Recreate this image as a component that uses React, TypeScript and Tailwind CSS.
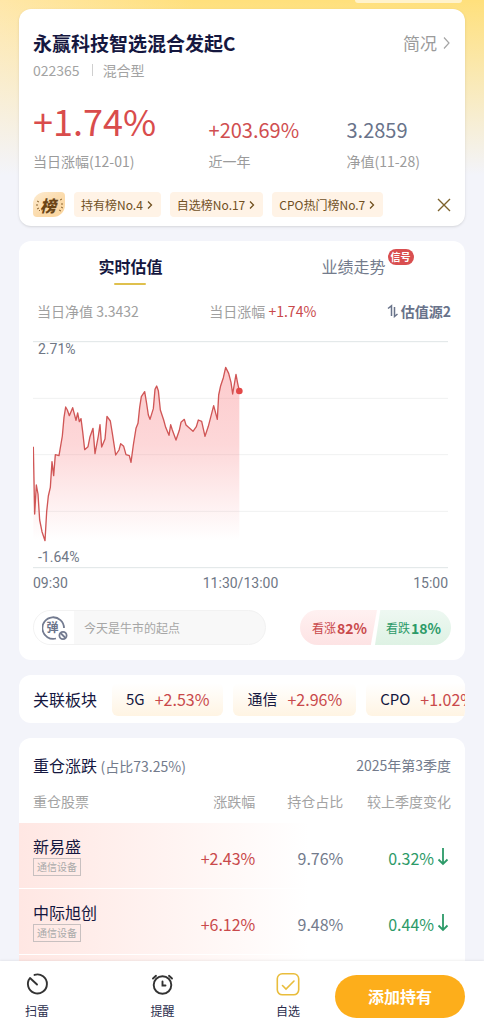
import { useState } from "react";

const ranks = ["持有榜No.4", "自选榜No.17", "CPO热门榜No.7"];

const sectors = [
  { name: "5G", change: "+2.53%" },
  { name: "通信", change: "+2.96%" },
  { name: "CPO", change: "+1.02%" },
];

const stocks = [
  { name: "新易盛", tag: "通信设备", change: "+2.43%", ratio: "9.76%", diff: "0.32%" },
  { name: "中际旭创", tag: "通信设备", change: "+6.12%", ratio: "9.48%", diff: "0.44%" },
];

const line =
  "100,350 104,552 109,465 114,492 119,570 126,605 135,632 140,545 145,498 151,472 156,395 161,437 166,374 177,377 187,318 192,262 197,231 202,240 208,257 218,233 228,271 233,249 238,275 243,266 248,305 254,359 264,350 270,320 279,295 285,371 295,318 300,284 305,351 315,327 321,259 331,273 337,310 347,375 357,360 362,341 371,349 378,374 388,377 393,397 400,345 408,295 414,280 419,232 424,200 434,185 439,215 445,255 450,268 460,236 465,178 470,168 475,182 481,240 491,270 497,292 507,316 512,284 517,300 528,330 538,301 543,277 553,268 558,285 579,304 589,290 595,270 605,274 615,319 625,289 641,227 652,268 656,195 662,167 670,143 677,112 686,130 693,157 698,192 708,133 713,160 718,183";

function RankBadge() {
  return (
    <span className="relative flex h-[25px] w-8 items-center justify-center rounded-tl-xl rounded-tr-sm rounded-br-xl rounded-bl-sm bg-linear-to-br from-[#fdecd2] via-[#fbdcae] to-[#fbd49a] pr-0.5">
      <svg className="absolute inset-0" width="32" height="25" viewBox="0 0 32 25" fill="none" stroke="#8a6430" strokeWidth="1">
        <path d="M4 9l2 1M3 13h2M4 17l2-1M6 19l1-1M27 8l2-1M28 12h2M28 15l2 1M26 18l2 1" />
      </svg>
      <span className="text-base leading-6 font-black text-[#6b4516] italic">榜</span>
    </span>
  );
}

function FundCard() {
  return (
    <section className="rounded-xl bg-white px-3.5 pt-5 pb-[9px] shadow-sm">
      <div className="flex items-center justify-between">
        <h1 className="text-[19px] leading-7 font-bold text-[#15173f]">永赢科技智选混合发起C</h1>
        <a href="#profile" className="flex items-center gap-0.5 text-[17px] leading-7 text-[#9b9b9b]">
          简况
          <svg width="12" height="14" viewBox="0 0 12 14" fill="none" stroke="#a5a5a5" strokeWidth="1.2">
            <path d="M5 1.500L10 7l-5 5.500" />
          </svg>
        </a>
      </div>
      <div className="mt-[3px] flex items-center text-sm leading-5 text-[#a3a3a3]">
        <span>022365</span>
        <span className="mr-2.5 ml-3 h-3 w-px bg-[#cfcfcf]" />
        <span>混合型</span>
      </div>
      <div className="mt-4 grid grid-cols-[42fr_33fr_25fr] items-end text-sm leading-5 text-[#9b9b9b]">
        <div>
          <p className="text-4xl leading-12 text-[#d94c4c]">+1.74%</p>
          <p className="mt-[7px]">当日涨幅(12-01)</p>
        </div>
        <div>
          <p className="text-xl leading-7 text-[#d04e50]">+203.69%</p>
          <p className="mt-[7px]">近一年</p>
        </div>
        <div>
          <p className="text-xl leading-7 text-[#69738a]">3.2859</p>
          <p className="mt-[7px]">净值(11-28)</p>
        </div>
      </div>
      <div className="mt-[21px] flex items-center gap-[9px]">
        <RankBadge />
        {ranks.map((rank) => (
          <a
            key={rank}
            href="#rank"
            className="flex h-[25px] items-center gap-[3px] rounded bg-[#fff3e6] px-[7px] text-xs whitespace-nowrap text-[#70501f]"
          >
            {rank}
            <svg width="8" height="10" viewBox="0 0 8 10" fill="none" stroke="#70501f" strokeWidth="1.3">
              <path d="M2 1.500L5.500 5 2 8.500" />
            </svg>
          </a>
        ))}
        <button type="button" aria-label="关闭" className="ml-auto">
          <svg width="14" height="14" viewBox="0 0 14 14" fill="none" stroke="#7d622c" strokeWidth="1.4">
            <path d="M1 1l12 12M13 1L1 13" />
          </svg>
        </button>
      </div>
    </section>
  );
}

function Chart() {
  return (
    <div className="mt-[19px] mr-[3px] font-[Roboto] text-sm leading-5 text-[#6f7785]">
      <div className="relative">
        <svg className="block h-auto w-full" viewBox="99 33 1245 684" fill="none">
          <defs>
            <linearGradient id="area" x1="0" y1="0" x2="0" y2="1">
              <stop offset="0" stopColor="#f87c80" stopOpacity="0.4" />
              <stop offset="0.45" stopColor="#f87c80" stopOpacity="0.3" />
              <stop offset="1" stopColor="#f87c80" stopOpacity="0" />
            </linearGradient>
          </defs>
          <path d="M99 205h1245M99 374h1245M99 544h1245" stroke="#f0f1f1" strokeWidth="3" />
          <path d="M99 35h1245M99 713h1245" stroke="#dfe5e7" strokeWidth="3" />
          <polygon points={`100,632 ${line} 718,632`} fill="url(#area)" />
          <polyline points={line} stroke="#d05656" strokeWidth="4" strokeLinejoin="round" />
          <circle cx="718" cy="183" r="10" fill="#e34848" />
        </svg>
        <span className="absolute -top-0.5 left-[5px]">2.71%</span>
        <span className="absolute bottom-0.5 left-[5px]">-1.64%</span>
      </div>
      <div className="mt-1 flex justify-between">
        <span className="flex-1">09:30</span>
        <span>11:30/13:00</span>
        <span className="flex-1 text-right">15:00</span>
      </div>
    </div>
  );
}

function ValuationCard() {
  const [comment, setComment] = useState("");

  return (
    <section className="mt-[15px] rounded-xl bg-white pt-[13px] pb-[15px]">
      <div className="grid grid-cols-2 justify-items-center">
        <button type="button" className="flex flex-col items-center text-base leading-6 font-bold text-[#15173f]">
          实时估值
          <span className="mt-[5px] h-0.5 w-8 rounded-full bg-[#dfc04e]" />
        </button>
        <button type="button" className="relative self-start text-base leading-6 text-[#737b8c]">
          业绩走势
          <span className="absolute -top-[5px] left-full ml-0.5 h-4 w-[26px] rounded-full bg-[#d94f50] text-center text-[10px] leading-4 font-bold text-white">
            信号
          </span>
        </button>
      </div>
      <div className="px-3.5">
        <div className="mt-4 mb-5 flex justify-between pl-1 text-sm leading-5 text-[#a0a0a0]">
          <span>当日净值 3.3432</span>
          <span>
            当日涨幅 <span className="text-[#c9494b]">+1.74%</span>
          </span>
          <button type="button" className="flex items-center gap-[3px] font-bold text-[#69738a]">
            <svg width="11" height="14" viewBox="0 0 11 14" fill="none" stroke="#69738a" strokeWidth="1.5">
              <path d="M1 4.500L4.500 1.800V12M7.500 3v9.500L10.500 10" />
            </svg>
            估值源2
          </button>
        </div>
        <Chart />
        <div className="mt-[17px] flex gap-[34px]">
          <div className="flex h-[35px] min-w-0 flex-1 overflow-hidden rounded-full border border-[#f2f2f2] bg-[#f8f8f8]">
            <button type="button" aria-label="弹幕" className="flex w-10 shrink-0 items-center justify-center bg-white">
              <span className="relative flex size-6 items-center justify-center pr-[3px] pb-0.5">
                <svg className="absolute inset-0" width="28" height="26" viewBox="0 0 28 26" fill="none" stroke="#737b90" strokeWidth="1.8">
                  <path d="M14 22.500A10.800 10.800 0 1 1 22 12" />
                  <circle cx="21" cy="19.500" r="3.600" />
                  <path d="M18.500 17l5 5" />
                </svg>
                <span className="text-xs leading-4 font-bold text-[#69738a]">弹</span>
              </span>
            </button>
            <input
              type="text"
              aria-label="评论"
              placeholder="今天是牛市的起点"
              value={comment}
              onChange={(e) => setComment(e.target.value)}
              className="min-w-0 flex-1 pl-2.5 text-xs placeholder:text-[#a6a6a6]"
            />
          </div>
          <div className="flex text-xs">
            <button
              type="button"
              className="flex h-[35px] w-[77px] items-center gap-px rounded-l-full bg-linear-to-b from-[#fff1f1] to-[#fde3e4] pl-3 text-[#c9494b] [clip-path:polygon(0_0,100%_0,92%_100%,0_100%)]"
            >
              看涨<span className="text-sm font-bold">82%</span>
            </button>
            <button
              type="button"
              className="-ml-0.5 flex h-[35px] w-[76px] items-center gap-px rounded-r-full bg-linear-to-b from-[#eef8f2] to-[#def2e4] pl-[11px] text-[#2c9a68] [clip-path:polygon(7%_0,100%_0,100%_100%,0_100%)]"
            >
              看跌<span className="text-sm font-bold">18%</span>
            </button>
          </div>
        </div>
      </div>
    </section>
  );
}

function SectorCard() {
  return (
    <section className="mt-[15px] flex h-12 items-center gap-[15px] overflow-hidden rounded-xl bg-white pl-3.5">
      <h2 className="shrink-0 text-base leading-6 text-[#15173f]">关联板块</h2>
      <div className="flex gap-2.5">
        {sectors.map((sector) => (
          <a
            key={sector.name}
            href="#sector"
            className="flex h-[33px] shrink-0 items-center gap-2.5 rounded-md bg-linear-to-b from-white to-[#fff4e3] px-3.5 text-[15px] text-[#15173f]"
          >
            {sector.name}
            <span className="text-base text-[#c9494b]">{sector.change}</span>
          </a>
        ))}
      </div>
    </section>
  );
}

function HoldingsCard() {
  return (
    <section className="mt-[15px] flex flex-1 flex-col rounded-t-xl bg-white pt-[15px]">
      <div className="flex items-center justify-between px-3.5 text-sm leading-6 text-[#737b8c]">
        <h2 className="text-base leading-6 text-[#15173f]">
          重仓涨跌 <span className="text-sm text-[#737b8c]">(占比73.25%)</span>
        </h2>
        <span>2025年第3季度</span>
      </div>
      <table className="mt-3.5 w-full table-fixed text-right">
        <thead>
          <tr className="text-sm leading-5 text-[#a3a3a3]">
            <th className="w-[35%] pb-3 pl-3.5 text-left font-normal">重仓股票</th>
            <th className="w-[18%] pb-3 font-normal">涨跌幅</th>
            <th className="w-22 pb-3 font-normal">持仓占比</th>
            <th className="pr-3.5 pb-3 font-normal">较上季度变化</th>
          </tr>
        </thead>
        <tbody>
          {stocks.map((stock) => (
            <tr
              key={stock.name}
              className="border-b border-white bg-linear-to-r from-[#ffe7e3] to-white to-65% bg-no-repeat text-base text-[#737b8c]"
            >
              <td className="pt-[11px] pb-3 pl-3.5 text-left text-[#15173f]">
                <p className="leading-6">{stock.name}</p>
                <span className="block h-[18px] w-12 border border-[#c8c0c0] text-center text-[10px] leading-4 text-[#aaa]">
                  {stock.tag}
                </span>
              </td>
              <td className="pt-1 text-[#c9494b]">{stock.change}</td>
              <td className="pt-1">{stock.ratio}</td>
              <td className="pt-1 pr-3.5 text-[#2c9a68]">
                <span className="flex items-center justify-end">
                  {stock.diff}
                  <svg width="17" height="20" viewBox="0 0 17 20" fill="none" stroke="#2c9a68" strokeWidth="1.8">
                    <path d="M9 0v16M4.500 11.500L9 16l4.500-4.500" />
                  </svg>
                </span>
              </td>
            </tr>
          ))}
        </tbody>
      </table>
      <div className="flex-1 bg-linear-to-r from-[#ffe7e3] to-white to-65%" />
    </section>
  );
}

function BottomBar() {
  return (
    <nav className="sticky bottom-0 flex shrink-0 items-center gap-[35px] bg-white pr-[19px] shadow-[0_-1px_2px_rgba(0,0,0,0.06)]">
      <div className="flex flex-1 justify-between pt-[11px] pb-3 pl-[25px] text-xs leading-4 text-[#2a2c4c]">
        <a href="#scan" className="flex flex-col items-center gap-[7px]">
          <svg width="24" height="24" viewBox="0 0 24 24" fill="none" stroke="#333" strokeWidth="1.9" strokeLinecap="round">
            <path d="M9.500 2.900A9.500 9.500 0 1 1 5 6L12 12.500" strokeLinejoin="round" />
          </svg>
          扫雷
        </a>
        <a href="#remind" className="flex flex-col items-center gap-[7px]">
          <svg width="24" height="24" viewBox="0 0 24 24" fill="none" stroke="#333" strokeWidth="1.9" strokeLinecap="round">
            <circle cx="12.500" cy="13" r="8.800" />
            <path d="M12.500 9.500v4h3M3 6.500l3-2.700M22 6.500l-3-2.700" />
          </svg>
          提醒
        </a>
        <a href="#watch" className="flex flex-col items-center gap-[7px]">
          <svg width="24" height="24" viewBox="0 0 24 24" fill="none" stroke="#e9bd3c" strokeWidth="1.6" strokeLinecap="round">
            <rect x="1.300" y="1.800" width="21.400" height="21" rx="5" />
            <path d="M6.500 13.500l3.500 3.500 8-8" />
          </svg>
          自选
        </a>
      </div>
      <button type="button" className="h-[43px] w-[130px] rounded-full bg-[#fdae1b] text-base font-bold text-white">
        添加持有
      </button>
    </nav>
  );
}

export default function App() {
  return (
    <div className="flex min-h-screen flex-col bg-[#f3f4fa] font-['Noto_Sans_CJK_SC',sans-serif]">
      <main className="flex flex-1 flex-col bg-[linear-gradient(to_bottom,transparent,#f3f4fa_175px),linear-gradient(to_right,#ffe7a8,#ffe07c_40%,#ffe07c)] px-[19px]">
        <div className="flex h-[9px] justify-end pr-[3px]">
          <div className="h-[3px] w-[107px] rounded-b-full bg-[#fff3cc]" />
        </div>
        <FundCard />
        <ValuationCard />
        <SectorCard />
        <HoldingsCard />
      </main>
      <BottomBar />
    </div>
  );
}
